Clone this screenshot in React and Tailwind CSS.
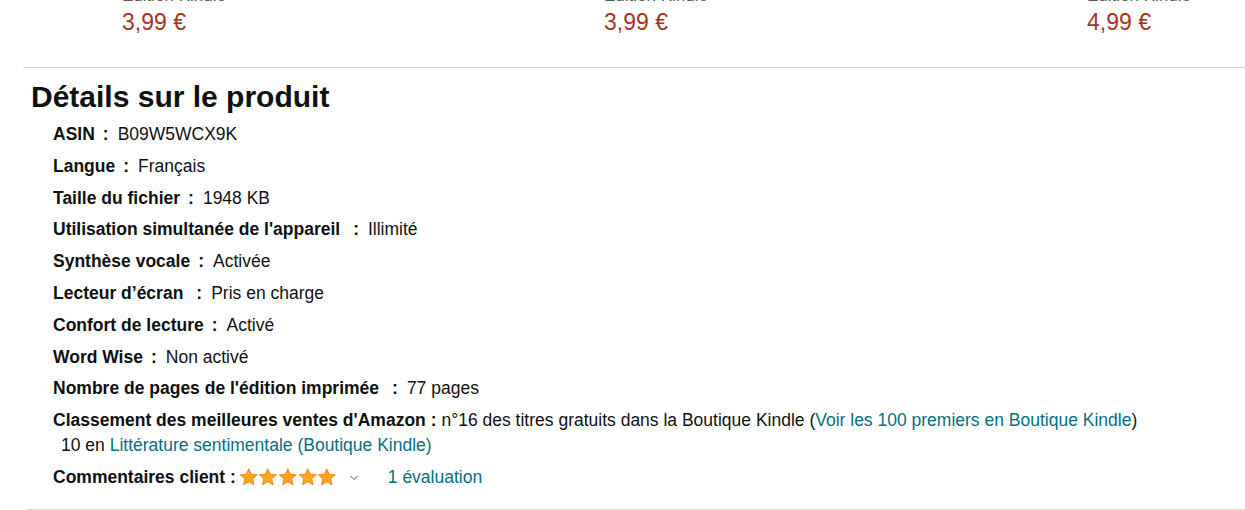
import React from "react";

const font = { fontFamily: '"Liberation Sans", Arial, sans-serif' };

function Star() {
  return (
    <svg width="19.6" height="18" viewBox="0 0 20 19" className="block">
      <path
        d="M10 0.8 L12.6 6.6 L19 7.2 L14.2 11.4 L15.6 17.8 L10 14.5 L4.4 17.8 L5.8 11.4 L1 7.2 L7.4 6.6 Z"
        fill="#FFA41C"
        stroke="#E67A00"
        strokeWidth="0.8"
        strokeLinejoin="round"
      />
    </svg>
  );
}

function Row({ label, value, wide, last }) {
  return (
    <li className={`flex items-baseline leading-[24px] ${last ? "" : "mb-[7.8px]"}`}>
      <span className="font-bold">{label}</span>
      <span className={`font-bold ${wide ? "ml-[13px]" : "ml-[8px]"} mr-[9px]`}>:</span>
      <span>{value}</span>
    </li>
  );
}

export default function App() {
  const prices = ["3,99 €", "3,99 €", "4,99 €"];
  return (
    <div
      className="w-[1245px] h-[510px] overflow-hidden bg-white text-[#0F1111] text-[17.5px]"
      style={font}
    >
      <div className="grid grid-cols-[482px_483px_1fr] pl-[122px]">
        {prices.map((p, i) => (
          <div key={i} className="flex flex-col">
            <div className="-mt-[14px] leading-[20px] text-[17px] text-[#565959]">Édition Kindle</div>
            <div className="leading-[32px] text-[23px] text-[#A9331C]">{p}</div>
          </div>
        ))}
      </div>

      <div className="mt-[29px] ml-[23px] border-t border-[#D5D9D9]" />

      <h2 className="mt-[11px] ml-[31px] text-[30px] font-bold leading-[36px]">Détails sur le produit</h2>

      <ul className="mt-[7px] ml-[53px]">
        <Row label="ASIN" value="B09W5WCX9K" />
        <Row label="Langue" value="Français" />
        <Row label="Taille du fichier" value="1948 KB" />
        <Row label="Utilisation simultanée de l'appareil" value="Illimité" wide />
        <Row label="Synthèse vocale" value="Activée" />
        <Row label="Lecteur d’écran" value="Pris en charge" wide />
        <Row label="Confort de lecture" value="Activé" />
        <Row label="Word Wise" value="Non activé" />
        <Row label="Nombre de pages de l'édition imprimée" value="77 pages" wide />
        <li className="leading-[24px]">
          <div className="flex items-baseline">
            <span className="font-bold">Classement des meilleures ventes d'Amazon :</span>
            <span className="ml-[5px]">
              n°16 des titres gratuits dans la Boutique Kindle (
              <span className="text-[#007185]">Voir les 100 premiers en Boutique Kindle</span>)
            </span>
          </div>
          <div className="mt-[1px] ml-[8px]">
            10 en <span className="text-[#007185]">Littérature sentimentale (Boutique Kindle)</span>
          </div>
        </li>
        <li className="mt-[8px] flex items-center leading-[24px]">
          <span className="font-bold">Commentaires client :</span>
          <span className="ml-[3px] flex items-center">
            <Star />
            <Star />
            <Star />
            <Star />
            <Star />
          </span>
          <svg width="10" height="6" viewBox="0 0 10 6" className="ml-[12px] mt-[2px]">
            <polyline points="1.5,1 5,4.5 8.5,1" fill="none" stroke="#9a9a9a" strokeWidth="1.2" />
          </svg>
          <span className="ml-[29px] text-[#007185]">1 évaluation</span>
        </li>
      </ul>

      <div className="mt-[20px] ml-[27px] border-t border-[#D5D9D9]" />
    </div>
  );
}
